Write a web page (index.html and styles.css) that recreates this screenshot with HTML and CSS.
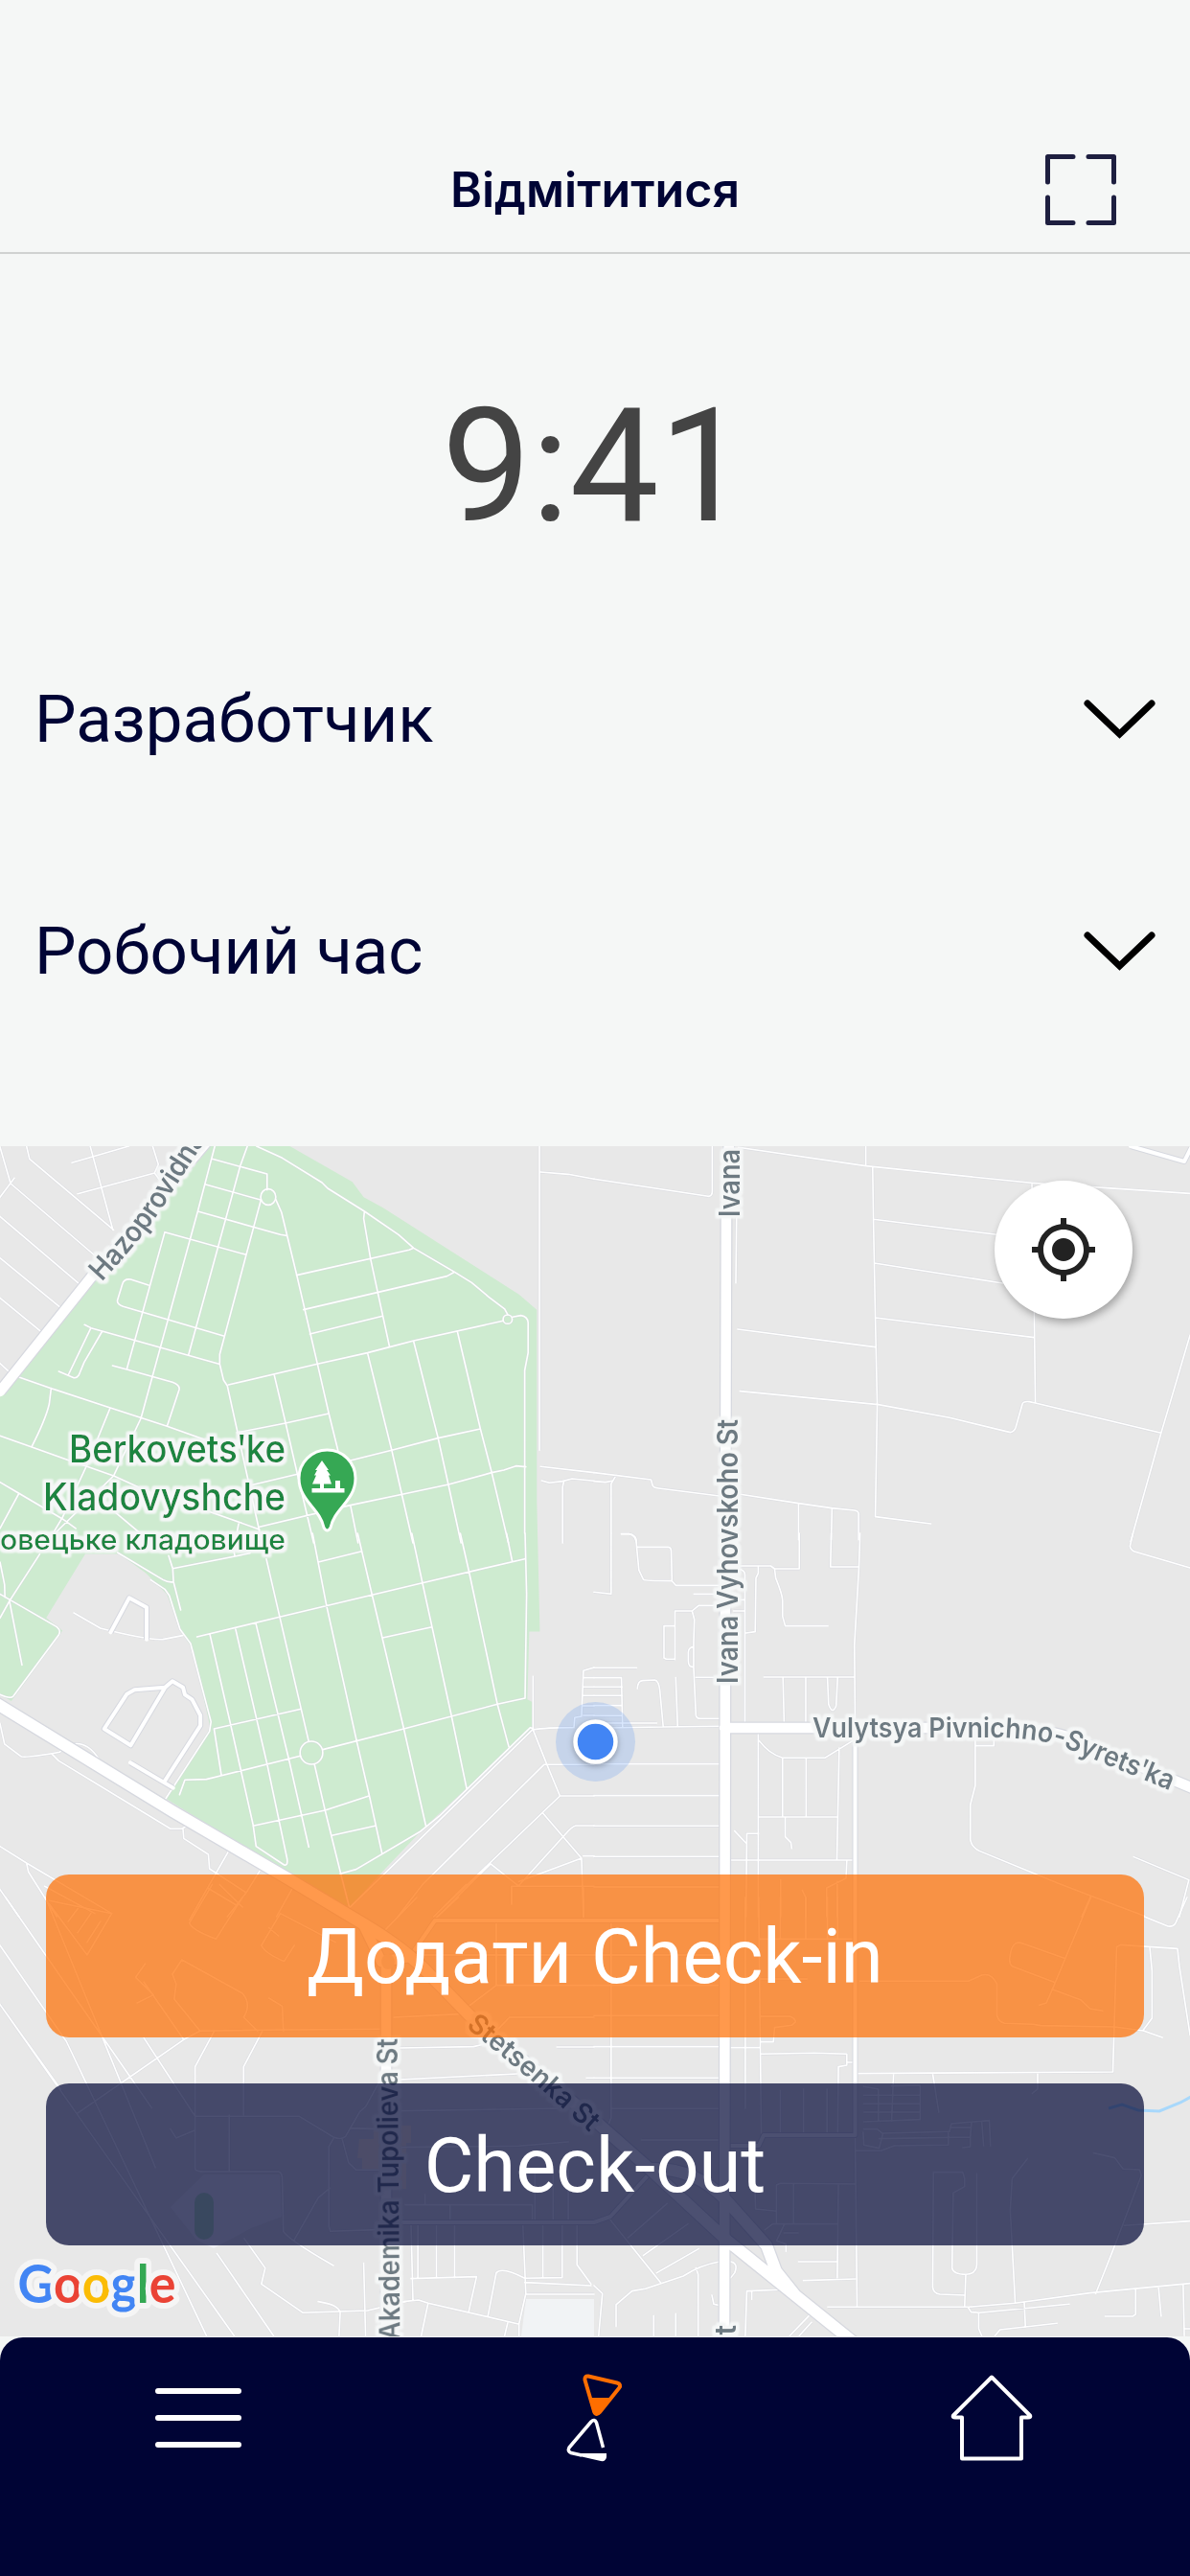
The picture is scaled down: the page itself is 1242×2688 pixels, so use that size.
FILE: index.html
```html
<!DOCTYPE html>
<html lang="uk">
<head>
<meta charset="utf-8">
<title>Відмітитися</title>
<link rel="stylesheet" href="styles.css">
</head>
<body>
<div class="app">
  <header class="header">
    <h1 class="header-title">Відмітитися</h1>
    <svg class="scan-icon" viewBox="0 0 74 74"><path d="M2.500 29V2.500H29M45 2.500H71.500V29M71.500 45V71.500H45M29 71.500H2.500V45"/></svg>
  </header>
  <div class="clock">9:41</div>
  <div class="selects">
    <div class="select"><span>Разработчик</span><svg class="chevron" viewBox="0 0 75 42"><path d="M4 4L37.500 36L71 4"/></svg></div>
    <div class="select"><span>Робочий час</span><svg class="chevron" viewBox="0 0 75 42"><path d="M4 4L37.500 36L71 4"/></svg></div>
  </div>

  <main class="map">
    <svg class="map-canvas" viewBox="0 1196 1242 1242">
      <defs>
        <filter id="halo" filterUnits="userSpaceOnUse" x="0" y="1190" width="1242" height="1260">
          <feMorphology in="SourceAlpha" operator="dilate" radius="3" result="grown"/>
          <feGaussianBlur in="grown" stdDeviation="1" result="soft"/>
          <feFlood flood-color="#f5f7f7"/>
          <feComposite in2="soft" operator="in" result="rim"/>
          <feMerge><feMergeNode in="rim"/><feMergeNode in="rim"/><feMergeNode in="SourceGraphic"/></feMerge>
        </filter>
        <g id="minor">
          <g transform="translate(0 1190) scale(.3954 .3333)">
            <path d="M0 20L28 135L250 360M38 118L0 178M70 18L78 58L300 280M0 238L212 452M0 368L158 522M0 493L108 598M0 698L22 722M190 70L340 18M205 167L408 102L418 75L403 18M408 102L425 130M238 18L298 280"/>
            <path d="M567 18L522 222L372 870L300 1050L145 1230M653 18L634 80L498 670M560 58L705 105V155M543 138L690 187M522 222L740 295L755 298M688 190L650 358L580 670L580 700L590 750L600 768L685 1225M728 185L743 225L783 420L838 700L868 855L892 970M335 715L435 287L650 358M392 453L345 435Q327 432 323 450L310 500Q308 513 325 520L590 612M223 577L240 587L578 700M240 587L180 735M270 597L222 695L208 735Q202 745 195 743L155 723M297 705L335 717L455 757Q475 765 473 780L441 895M48 740L135 776L291 837L441 895L560 945M135 776L130 825Q120 875 84 958M291 837L228 1020L165 1180L140 1230M0 925L84 960L190 1005L228 1020L300 1050L420 1115M0 1070L50 1105L165 1185L200 1215M50 1105L0 1215"/>
            <path d="M677 18L745 55L850 132L865 150L962 222L1052 295L1092 337L1200 412L1245 445L1290 490L1332 528L1340 545M962 222L960 245L978 370L997 475L1028 645M783 422L1080 343L1092 337M801 530L1180 425L1200 412M818 606L1010 550M603 765L838 700L970 665L1028 647L1092 627L1328 565M1353 553L1375 548Q1393 552 1394 570V665L1385 720V1230M724 735L754 885L785 1045L828 1260M970 665L1034 970L1090 1260M1092 630L1156 930L1184 1080L1217 1260M1207 597L1268 903L1298 1040L1342 1260M625 915L754 885L868 855M660 1080L785 1045M925 1002L1034 970L1156 932L1268 903M685 1210L925 1142L1062 1108L1184 1077L1298 1040L1330 1032L1362 1019L1388 1022M925 1142L945 1260M500 1140L685 1218M630 1200L625 1230M300 1160L370 1230"/>
            <ellipse cx="708" cy="177" rx="20" ry="25"/><ellipse cx="1340" cy="560" rx="12" ry="14"/>
            <path d="M1424 18V970M1427 1021L1568 1040M1430 1065L1450 1072L1485 1067L1510 1059L1568 1066M1488 1070L1485 1085V1260M1427 99L1500 106L1568 121"/>
          </g>
          <g transform="translate(620 1190) scale(.3967 .3333)">
            <path d="M380 22L715 80L1150 133L1568 166M715 18V80M733 82L735 250L740 555L745 828L740 1178L886 1200M735 247L1060 295M737 384L1075 447M741 555L1158 617M1152 133L1158 540L1161 820M378 591L740 647M384 785L748 827L935 868L1095 914Q1105 912 1109 900L1127 825Q1130 816 1145 818L1161 822L1492 916L1412 1255M1492 916L1568 610M375 240L373 446M0 121L300 175Q311 175 311 160V18M0 1040L150 1062L154 1080Q155 1087 170 1089L330 1113M58 1048L45 1075V1230M0 1067L30 1070L48 1066M385 1108L538 1136L625 1151L685 1158Q697 1160 696 1172V1250M538 1136V1250M626 1151L624 1250M72 1232H92Q112 1235 112 1260"/>
          </g>
          <g transform="translate(0 1600) scale(.3954 .3333)">
            <path d="M0 90L12 160L13 200M105 65L25 212L0 265M0 190L150 293Q162 305 155 318L35 510Q28 520 0 505M25 212L58 412M310 60L430 145Q445 155 458 152M398 146L435 175L447 195L475 300L503 345L515 400L557 590L553 620L435 835M445 70L456 110L458 152L477 240M456 110L620 72L660 62M195 249L265 297Q390 335 430 332L482 320M618 60L620 72M703 80L738 260L815 652M825 0L862 227L942 653L975 822L1008 1000M944 0L982 192L1066 612L1124 915M1087 0L1115 155L1192 573L1232 800M1215 0L1238 120L1313 535L1343 668M1337 0L1352 87M840 90L955 56M520 324L738 262L1115 155L1385 80M1386 0L1390 190L1386 516L1313 535L1066 612L852 677M1010 327L1140 293M554 316L609 600L668 912L676 980L750 1038Q760 1042 758 1020L705 722L621 296M675 280L762 705L815 982M795 550L565 612L584 755M793 697L545 770L488 772L474 818M668 916L858 867L974 822M876 946L990 916M830 723L858 867L900 1068L922 1170M898 1066L940 1052L1110 933L1160 885L1400 608L1408 612L920 1175M1407 448V615L1444 725L1478 822H1568M1407 615Q1440 608 1515 608M1515 608L1517 577L1535 573L1540 430L1568 420M1540 452H1568M1540 481H1568M1540 508H1568M1540 540H1568M1540 570H1568M1568 724H1436L1115 1100L1050 1200M1478 822L1145 1200L1230 1100M1433 876L1535 1017L1540 1200M1568 915H1520Q1510 917 1490 945L1368 1105H1568M1535 1017L1370 1090M1568 1010H1540M1350 1160V1105H1370L1295 1035M1295 1035L1155 1200"/>
            <ellipse cx="822" cy="687" rx="30" ry="36"/>
            <path d="M0 595L12 660L55 698Q62 705 158 685L165 675M190 660Q230 650 260 705M138 692L155 712L450 925H480L490 918M483 925L485 955L550 1005L553 1050L650 1125L600 1200M602 998L548 1110L500 1210M548 1110L625 1165M685 1058L650 1125M770 1115L730 1200M0 980L70 1032L295 1190M70 1032L75 1060L150 1200M0 1115L50 1200M118 1105L250 1190"/>
          </g>
          <g transform="translate(620 1600) scale(.3967 .3333)">
            <path d="M45 0V190L0 184M72 2H92Q112 5 112 40L118 115L130 145Q133 149 205 149M113 43H195Q203 45 203 55L205 149L215 163H330M263 190H330M213 395V243H258L275 226H320M258 243L264 270L262 340V420L268 570Q270 580 280 580H330M262 355Q247 358 248 375V400Q248 420 262 418M184 390V290H213M184 390L190 394H213M0 421H112M0 452H72L75 605M0 481H74M0 508H74M0 539H74M0 571H74M0 594H165M0 610L180 606L330 604M114 486Q115 462 128 461L160 459Q170 462 173 490L182 605M215 452L220 605M268 451H330M0 722H330M0 821H330M0 916H330M0 1012H330M0 1107H330M378 102H465L475 111H540V0M475 111L478 140Q495 190 496 210V260L503 290H615M380 112Q397 115 397 130V595M367 208H397M367 243H397M432 106V125L426 140L424 308L400 312M624 0L622 105H697L700 0M697 105L685 350L687 600M447 450H685M497 450L500 592M557 450V592M614 450L617 535Q627 570 637 540L641 450M432 628V1200M435 650Q460 690 496 703H607L680 650M496 703V887M558 703V887M645 672L639 1022M433 888H638M503 888V950L518 968L520 986M360 1023H683M400 1200L402 940H433M370 932L400 970M665 1025L663 1080L612 1110V1200M640 1090V1200M491 1085V1200M548 1118L557 1140V1200M1418 0L1410 40Q1412 52 1422 57L1568 108M1003 650V790L990 850V960Q995 985 1015 995L1220 1095L1307 1135L1448 1198M1003 665H1052V650M1420 1013L1565 1085L1540 1200M1307 1135L1283 1200"/>
          </g>
          <g transform="translate(0 1980) scale(.3954 .3333)">
            <path d="M15 0L400 658M120 0L410 845M0 150L175 450L545 1372M0 335L240 740L618 1372M130 10L295 50L230 180L130 20M205 110L240 50M230 140L265 75M180 75L205 35M0 335L160 600M500 80L560 -40M500 80Q505 100 570 130L640 0M580 -40L640 30M690 150L740 50L885 140M690 150Q700 175 750 200L777 150M735 120L710 95M383 208L358 250L405 305L362 330M455 240L480 195L640 300Q665 335 643 375L680 418M455 240L465 270L460 318L528 418L485 445L380 265M710 315L745 340L748 418M528 418L690 415L1005 412M565 420L515 530V850Q518 858 540 858H735Q745 862 745 880L748 1045Q760 1070 880 1152M692 420L643 530V680M485 445L205 675M380 440L515 685H790L880 750Q900 760 912 748L950 670L965 655L1000 580M605 682V858M450 725L465 753L512 730M925 722L1000 725M880 755L868 780V1030L872 1045L1000 1040M903 755L920 830L940 853H1000M870 910L840 940L775 1075M645 1068L700 1160L690 1210L800 1300L970 1293L1070 1265M573 1115L722 1372M840 1265Q895 1275 898 1300L895 1372M960 1145L965 1372"/>
            <path d="M1055 471L1250 467L1275 460M1470 468H1568M1055 570L1365 552M1548 565H1568M1060 668L1490 660M1060 782L1370 778L1500 765M1070 962H1405V1010M1122 930V962M1188 962V1010M1412 850V1010M1460 850V1010M1500 850V1010M1085 1025L1090 1260M1103 1025V1190M1152 1025V1190M1200 1025V1190M1085 1193L1258 1187L1237 1298M1065 1265L1105 1260L1130 1270L1368 1335M1130 1270L1112 1372M1380 1020L1388 1240L1370 1335V1372M1433 1020V1190M1484 1020V1190L1385 1192M1523 1020V1150L1560 1210M1288 1310L1310 1175Q1325 1155 1385 1192M1385 1205L1560 1215M1388 1242H1568M1340 1332L1332 1372M1110 180H1568M1310 80V275L1215 360M1310 275H1568M1040 375L1215 365M1345 375H1568M1345 375L1300 430M1350 20V-30M1540 70V-30M1010 110L1100 0M1145 70L1210 0"/>
          </g>
          <g transform="translate(620 1980) scale(.3967 .3333)">
            <path d="M0 180H330M0 275H330M0 370H330M0 467H330M0 565H330M45 80V690L35 720M45 661H330M125 759H330M360 470H437M398 0V660M433 0L440 745M437 130H680M437 255H560M437 372H515Q530 378 530 390L520 400L475 407L472 452H440M440 490L580 487L665 490V525L643 530L641 740M665 516H685M490 0V130M557 0V130M614 0V130M641 0V130M490 605V745M551 600V745M613 600V745M692 551L1365 546L1375 155L1385 148L1535 160L1540 215L1568 430M788 552L783 700M891 552L907 672M1167 549V600L1153 613M1448 60L1510 90Q1525 92 1530 80L1560 0M1307 0L1205 290L1190 330L1172 337M1205 287L1280 320L1305 348L1338 355M1237 190L1130 145Q1100 130 1095 180Q1090 205 1100 215L1210 265M700 262H985L1020 243Q1045 235 1060 270V370Q1065 390 1080 394L1155 397L1175 401L1370 405L1445 417L1495 438M1462 155L1468 230V378L1445 415"/>
            <path d="M710 592L748 600V700M783 590L858 588V695L710 702M710 619H858M710 646H858M710 672H858M710 725H745L760 740L750 785L710 775L708 735M760 738L935 733L940 708L1040 698L1043 777M750 755L990 750L993 705M940 720H990M1020 700L1025 777M688 793H755L790 777L932 775V735M970 783L990 780V750M687 750L692 1280M893 860H970L975 880V905L945 925L942 1160Q945 1180 978 1180L975 1280M893 860L891 1220Q893 1240 910 1242L975 1245M1007 865V1150Q1005 1180 978 1180M1140 818L1100 880L1095 980L1108 1270M1315 800L1370 815L1392 850L1435 852L1440 870L1370 1090L1320 1240M1395 1027L1568 1013M480 1020V900L490 895L687 897M525 897V1020M423 900L425 975L480 982M450 1040L470 1022H640M643 897L640 1190M538 1140H640M551 1199L687 1194M500 1025L480 1075L505 1085V1108M500 1050H537M398 1372L402 1232L490 1228M415 1232V1258M615 1282H985L1108 1270L1305 1238L1568 1208M985 1285L992 1298L1015 1300L1250 1273M1012 1302V1350L1020 1372M1132 1268L1135 1345M1055 1372L1068 1353L1218 1333M1425 1227V1305L1418 1311H1345M1485 1218L1492 1310M1550 1212L1553 1372M1553 1350H1568M0 1010L40 1005L175 1205M130 1120L247 1022M90 1065L192 958M165 1175L275 1100M58 1343V1275L100 1232L135 1225L235 1185Q280 1150 330 1140M268 1160L274 1180V1372M310 1245L315 1273L330 1277M360 1140Q380 1145 370 1175L360 1190M157 1310V1372M215 1303V1372M0 1215L22 1240L12 1372M515 1372L565 1310M540 1372L572 1330"/>
          </g>
        </g>
        <g id="medium">
          <g transform="translate(0 1600) scale(.3954 .3333)"><path d="M292 310L341 202L387 232V332M436 482L355 490L335 503L275 612L345 664L436 482L455 463L483 482L488 505L507 520L529 570V602L435 775M344 718L457 797"/></g>
          <path d="M892.500 1818V2228H797L792 2239H762M427 2043L454 2004L751 2004M420 2319H620L637 2313L678 2268M1180 1196L1236 1212L1243 1198"/>
        </g>
        <g id="major">
          <path d="M0 1452L95 1333L217 1190M761 1190L758 1270L757 1620L756 2440M756 1803H1040Q1090 1802 1125 1816L1245 1866M403 2050V2440M380 2010L398 2047L427 2042"/>
        </g>
        <g id="highway">
          <path d="M-6 1776L180 1890L300 1960L380 2008Q425 2035 450 2062L490 2103L620 2212L680 2265L759 2338L892 2445M680 2263Q725 2262 757 2295L800 2343L810 2370L830 2395"/>
        </g>
        <path id="lane-east" d="M848 1813H1040Q1085 1814 1110 1823L1240 1876"/>
        <path id="lane-diagonal" d="M486 2115L558 2174L640 2247"/>
        <path id="lane-west" d="M106 1338Q158 1282 179 1245L230 1166"/>
      </defs>

      <rect class="land" y="1196" width="1242" height="1242"/>
      <g transform="translate(0 1190) scale(.3954 .3333)">
        <path class="park" d="M0 790L530 0H740L765 18L930 130L960 178L1010 210L1370 482L1417 530V1130L1425 1538H1397L1392 1750L1405 1758V1840L1125 2145L985 2320L925 2400L855 2370L440 2062L555 1840L512 1600L480 1540L440 1420L385 1355L315 1295H225L122 1495L165 1535L30 1755L0 1735Z"/>
      </g>
      <path class="school" d="M178 2303L213 2269H292L294 2313L262 2325L223 2346L205 2337Z"/>
      <path class="plot" d="M549 2399H620V2438H544Z"/>
      <rect class="pitch" x="203" y="2288" width="20" height="49" rx="10"/>
      <path class="venue" d="M375 2232H390V2218H429V2236H424V2284H414V2264H378V2252H373Z"/>
      <path class="river" d="M1157 2200L1171 2196L1188 2202L1210 2203L1232 2194L1243 2188"/>
      <use href="#minor" class="case minor-case"/><use href="#minor" class="road minor-road"/>
      <use href="#medium" class="case medium-case"/><use href="#medium" class="road medium-road"/>
      <use href="#major" class="case major-case"/><use href="#highway" class="case highway-case"/>
      <use href="#major" class="road major-road"/><use href="#highway" class="road highway-road"/>
      <ellipse class="island" cx="405" cy="2047" rx="7" ry="8"/>

      <g class="street">
        <text><textPath href="#lane-west" textLength="186" lengthAdjust="spacingAndGlyphs">Hazoprovidna</textPath></text>
        <text transform="translate(771.500 1270) rotate(-90)" textLength="71" lengthAdjust="spacingAndGlyphs">Ivana</text>
        <text transform="translate(769.500 1757) rotate(-90)" textLength="276" lengthAdjust="spacingAndGlyphs">Ivana Vyhovskoho St</text>
        <text transform="translate(768 2456) rotate(-90)" textLength="30" lengthAdjust="spacingAndGlyphs">St</text>
        <text transform="translate(417.500 2442) rotate(-90.500)" textLength="315" lengthAdjust="spacingAndGlyphs">Akademika Tupolieva St</text>
        <text class="street-curved"><textPath href="#lane-east" textLength="383" lengthAdjust="spacingAndGlyphs">Vulytsya Pivnichno-Syretsʹka</textPath></text>
        <text class="street-curved"><textPath href="#lane-diagonal" textLength="170" lengthAdjust="spacingAndGlyphs">Stetsenka St</textPath></text>
      </g>
      <g class="place">
        <text x="72" y="1525.500" textLength="226" lengthAdjust="spacingAndGlyphs">Berkovetsʹke</text>
        <text x="45" y="1576" textLength="253" lengthAdjust="spacingAndGlyphs">Kladovyshche</text>
        <text class="place-local" x="0" y="1616.500" textLength="298" lengthAdjust="spacingAndGlyphs">овецьке кладовище</text>
      </g>
      <path class="pin" d="M341.500 1513A29.500 29.500 0 0 1 371 1542.500C371 1566 349 1574 345 1594Q341.500 1600 338 1594C334 1574 312 1566 312 1542.500A29.500 29.500 0 0 1 341.500 1513Z"/>
      <path class="pin-tree" d="M336 1524L343 1534H341L345 1539.500H343L346 1548.500H338V1553H350V1545H355V1553H359.500V1557.500H325.500V1553H334V1548.500H326L330 1539.500H328L331 1534H329Z"/>
      <g class="logo">
        <text x="18.500" y="2403" textLength="165" lengthAdjust="spacingAndGlyphs"><tspan class="g-blue">G</tspan><tspan class="g-red">o</tspan><tspan class="g-yellow">o</tspan><tspan class="g-blue">g</tspan><tspan class="g-green">l</tspan><tspan class="g-red">e</tspan></text>
      </g>
      <circle class="me-halo" cx="621.500" cy="1817.500" r="41.500"/>
      <circle class="me-dot" cx="621.500" cy="1817.500" r="21"/>
    </svg>

    <div class="map-overlay">
      <button class="locate" aria-label="Locate"><svg viewBox="0 0 24 24"><path d="M12 8c-2.210 0-4 1.790-4 4s1.790 4 4 4 4-1.790 4-4-1.790-4-4-4zm8.940 3A8.994 8.994 0 0 0 13 3.060V1h-2v2.060A8.994 8.994 0 0 0 3.060 11H1v2h2.060A8.994 8.994 0 0 0 11 20.940V23h2v-2.060A8.994 8.994 0 0 0 20.940 13H23v-2h-2.060zM12 19c-3.870 0-7-3.130-7-7s3.130-7 7-7 7 3.130 7 7-3.130 7-7 7z"/></svg></button>
      <div class="actions">
        <button class="action check-in">Додати Check-in</button>
        <button class="action check-out">Check-out</button>
      </div>
    </div>
  </main>

  <nav class="tabs">
    <svg class="tab" viewBox="0 0 110 120"><path class="line bars" d="M13 35H97M13 63H97M13 91H97"/></svg>
    <svg class="tab" viewBox="-4 0 110 120">
      <path class="line amber" d="M44 19.500L74 26.500Q79 28 76 32L56 57Q52 61.500 50 56L40.500 23.500Q40 19 44 19.500Z"/>
      <path class="amber-fill" d="M44.500 42H69L56 59Q52 62 49 58Z"/>
      <path class="line glass" d="M59.500 94L52.500 68Q50.500 63.500 47 67L24 94Q22 98 26 99.500L37 102"/>
      <path class="sand" d="M34 100H63V104Q62 109 57 108L35 103Z"/>
    </svg>
    <svg class="tab" viewBox="0 0 110 120"><path class="line house" d="M55 20.500L95 60.500Q96 62.500 93 62.500H86V105.500H24V62.500H17Q14 62.500 15 60.500Z"/></svg>
  </nav>
</div>
</body>
</html>
```
FILE: styles.css
```css
* { box-sizing: border-box; }

body {
  margin: 0;
  background: #f5f7f6;
  color: #000435;
  font-family: Roboto, sans-serif;
}

.app {
  display: flex;
  flex-direction: column;
  width: 1242px;
  height: 2688px;
  overflow: hidden;
}

.header {
  display: grid;
  grid-template-columns: 1fr auto 1fr;
  align-items: center;
  height: 265px;
  padding: 132px 77px 0;
  border-bottom: 2px solid #d0d2d1;
}

.header-title {
  grid-column: 2;
  margin: 0;
  padding-top: 1px;
  font: 560 50.200px/1 Inter, sans-serif;
}

.scan-icon {
  justify-self: end;
  width: 74px;
  height: 74px;
  fill: none;
  stroke: #1e1f40;
  stroke-width: 5;
  stroke-linecap: round;
  stroke-linejoin: round;
}

.clock {
  padding: 139px 0 61px;
  color: #444;
  font-size: 166px;
  line-height: 165px;
  text-align: center;
}

.selects { height: 566px; }

.select {
  display: flex;
  align-items: center;
  justify-content: space-between;
  height: 242px;
  padding: 0 36px;
  font-size: 69px;
  line-height: 1;
}
.select span { padding-bottom: 2px; }

.chevron {
  width: 75px;
  height: 42px;
  fill: none;
  stroke: #000;
  stroke-width: 7;
  stroke-linecap: round;
}

.map {
  display: grid;
  height: 1242px;
  margin-bottom: 1px;
}

.map-canvas,
.map-overlay {
  grid-area: 1 / 1;
  width: 1242px;
  height: 1242px;
}

.map-overlay {
  z-index: 1;
  display: flex;
  flex-direction: column;
  align-items: flex-end;
  justify-content: space-between;
  padding: 36px 48px 95px;
}

.map path,
.map ellipse { vector-effect: non-scaling-stroke; }

.land { fill: #e8e8e8; }
.park { fill: #ceebd0; }
.school { fill: #f1f1f6; }
.plot { fill: #f1f3f5; }
.pitch { fill: #c0e5c4; }
.venue { fill: #fdf1df; }
.river { fill: none; stroke: #a8d8fb; stroke-width: 3; }
.island { fill: #e8e8e8; }

.case,
.road {
  fill: none;
  stroke-linejoin: round;
}
.case { stroke: #d6d8df; }
.road { stroke: #fff; stroke-linecap: round; }
.minor-case { stroke-width: 2.8; opacity: .6; }
.minor-road { stroke-width: 1.6; }
.medium-case { stroke-width: 6; }
.medium-road { stroke-width: 4; }
.major-case { stroke-width: 13; }
.major-road { stroke-width: 10.5; }
.highway-case { stroke-width: 14.5; }
.highway-road { stroke-width: 12; }

.street,
.place { filter: url(#halo); }
.street { fill: #6d7a82; font: 600 30px Inter, sans-serif; }
.street-curved { font-size: 29px; }
.place { fill: #1b8540; font: 450 39.5px Inter, sans-serif; }
.place-local { font-size: 29px; }

.pin { fill: #36a854; stroke: #fff; stroke-width: 3; }
.pin-tree { fill: #fff; }

.logo {
  font: 700 55px Lato, sans-serif;
  paint-order: stroke;
  stroke: #f5f5f5;
  stroke-width: 12;
  stroke-linejoin: round;
}
.g-blue { fill: #4285f4; }
.g-red { fill: #ea4335; }
.g-yellow { fill: #fbbc05; }
.g-green { fill: #34a853; }

.me-halo { fill: rgba(66, 133, 244, .2); }
.me-dot {
  fill: #4285f4;
  stroke: #fff;
  stroke-width: 4.5;
  filter: drop-shadow(0 2px 3px rgba(0, 0, 0, .3));
}

.locate {
  display: grid;
  place-items: center;
  width: 144px;
  height: 144px;
  margin-right: 12px;
  padding: 0;
  border: 0;
  border-radius: 50%;
  background: #fff;
  box-shadow: 2px 4px 8px rgba(0, 0, 0, .3);
}
.locate svg { width: 72px; height: 72px; fill: #222; }

.actions {
  display: grid;
  gap: 48px;
  width: 100%;
}

.action {
  height: 169.5px;
  padding: 2px 0 0;
  border: 0;
  border-radius: 24px;
  color: #fff;
  font: 400 79.5px/1 Roboto, sans-serif;
}
.check-in { background: rgba(255, 110, 0, .7); }
.check-out { background: rgba(0, 5, 53, .7); }

.tabs {
  display: grid;
  grid-template-columns: repeat(3, 1fr);
  justify-items: center;
  flex: 1;
  padding-top: 21px;
  border-radius: 24px 24px 0 0;
  background: #000435;
}

.tab { width: 110px; height: 120px; }
.line {
  fill: none;
  stroke: #fff;
  stroke-width: 4;
  stroke-linecap: round;
  stroke-linejoin: round;
}
.bars { stroke-width: 6; }
.amber { stroke: #ff6e00; }
.amber-fill { fill: #ff6e00; }
.glass { stroke-width: 3.5; stroke-linecap: butt; }
.sand { fill: #fff; }
```
